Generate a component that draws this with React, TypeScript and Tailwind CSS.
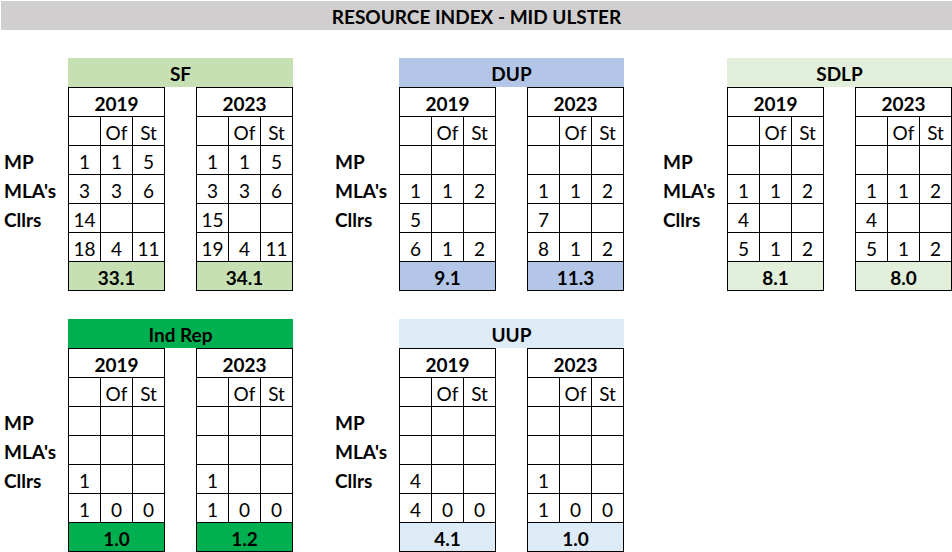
type Row = (string | number)[];

type YearTable = {
  year: string;
  rows: Row[]; // MP, MLA's, Cllrs, totals
  score: string;
};

type Party = {
  name: string;
  headerClass: string;
  tables: YearTable[];
};

const parties: Party[][] = [
  [
    {
      name: "SF",
      headerClass: "bg-[#c6e0b4]",
      tables: [
        { year: "2019", rows: [[1, 1, 5], [3, 3, 6], [14], [18, 4, 11]], score: "33.1" },
        { year: "2023", rows: [[1, 1, 5], [3, 3, 6], [15], [19, 4, 11]], score: "34.1" },
      ],
    },
    {
      name: "DUP",
      headerClass: "bg-[#b4c6e7]",
      tables: [
        { year: "2019", rows: [[], [1, 1, 2], [5], [6, 1, 2]], score: "9.1" },
        { year: "2023", rows: [[], [1, 1, 2], [7], [8, 1, 2]], score: "11.3" },
      ],
    },
    {
      name: "SDLP",
      headerClass: "bg-[#e2efda]",
      tables: [
        { year: "2019", rows: [[], [1, 1, 2], [4], [5, 1, 2]], score: "8.1" },
        { year: "2023", rows: [[], [1, 1, 2], [4], [5, 1, 2]], score: "8.0" },
      ],
    },
  ],
  [
    {
      name: "Ind Rep",
      headerClass: "bg-[#00b050]",
      tables: [
        { year: "2019", rows: [[], [], [1], [1, 0, 0]], score: "1.0" },
        { year: "2023", rows: [[], [], [1], [1, 0, 0]], score: "1.2" },
      ],
    },
    {
      name: "UUP",
      headerClass: "bg-[#ddebf7]",
      tables: [
        { year: "2019", rows: [[], [], [4], [4, 0, 0]], score: "4.1" },
        { year: "2023", rows: [[], [], [1], [1, 0, 0]], score: "1.0" },
      ],
    },
  ],
];

function Cell({ value }: { value?: string | number }) {
  return (
    <div className="w-[32px] h-[29px] border-r border-b border-black flex items-center justify-center pt-[2px]">
      {value}
    </div>
  );
}

function Table({ t, colour }: { t: YearTable; colour: string }) {
  return (
    <div className="w-[97px] border-l border-t border-black flex flex-col">
      <div className="h-[29px] border-r border-b border-black flex items-center justify-center pt-[2px] font-bold">
        {t.year}
      </div>
      <div className="flex">
        <Cell />
        <Cell value="Of" />
        <Cell value="St" />
      </div>
      {t.rows.map((r, i) => (
        <div key={i} className="flex">
          <Cell value={r[0]} />
          <Cell value={r[1]} />
          <Cell value={r[2]} />
        </div>
      ))}
      <div
        className={`h-[29px] border-r border-b border-black flex items-center justify-center pt-[2px] font-bold ${colour}`}
      >
        {t.score}
      </div>
    </div>
  );
}

function Section({ p }: { p: Party }) {
  return (
    <div className="flex flex-col">
      <div
        className={`ml-[68px] w-[225px] h-[29px] flex items-center justify-center pt-[2px] font-bold ${p.headerClass}`}
      >
        {p.name}
      </div>
      <div className="flex">
        <div className="w-[68px] pt-[1px] flex flex-col font-bold">
          <div className="h-[58px]" />
          {["MP", "MLA's", "Cllrs"].map((l) => (
            <div key={l} className="h-[29px] pl-[4px] flex items-center pt-[2px]">
              {l}
            </div>
          ))}
        </div>
        <Table t={p.tables[0]} colour={p.headerClass} />
        <div className="w-[31px]" />
        <Table t={p.tables[1]} colour={p.headerClass} />
      </div>
    </div>
  );
}

export default function App() {
  const gaps = ["ml-0", "ml-[38px]", "ml-[35px]"];
  return (
    <div className="w-[952px] h-[552px] overflow-hidden bg-white text-black text-[19px] leading-none font-['Lato',sans-serif]">
      <div className="mt-px ml-px h-[29px] bg-[#d0cece] flex items-center justify-center pt-[2px] font-bold">
        RESOURCE INDEX - MID ULSTER
      </div>
      <div className="mt-[28px] flex flex-col gap-[28px]">
        {parties.map((row, ri) => (
          <div key={ri} className="flex">
            {row.map((p, i) => (
              <div key={p.name} className={gaps[i]}>
                <Section p={p} />
              </div>
            ))}
          </div>
        ))}
      </div>
    </div>
  );
}
